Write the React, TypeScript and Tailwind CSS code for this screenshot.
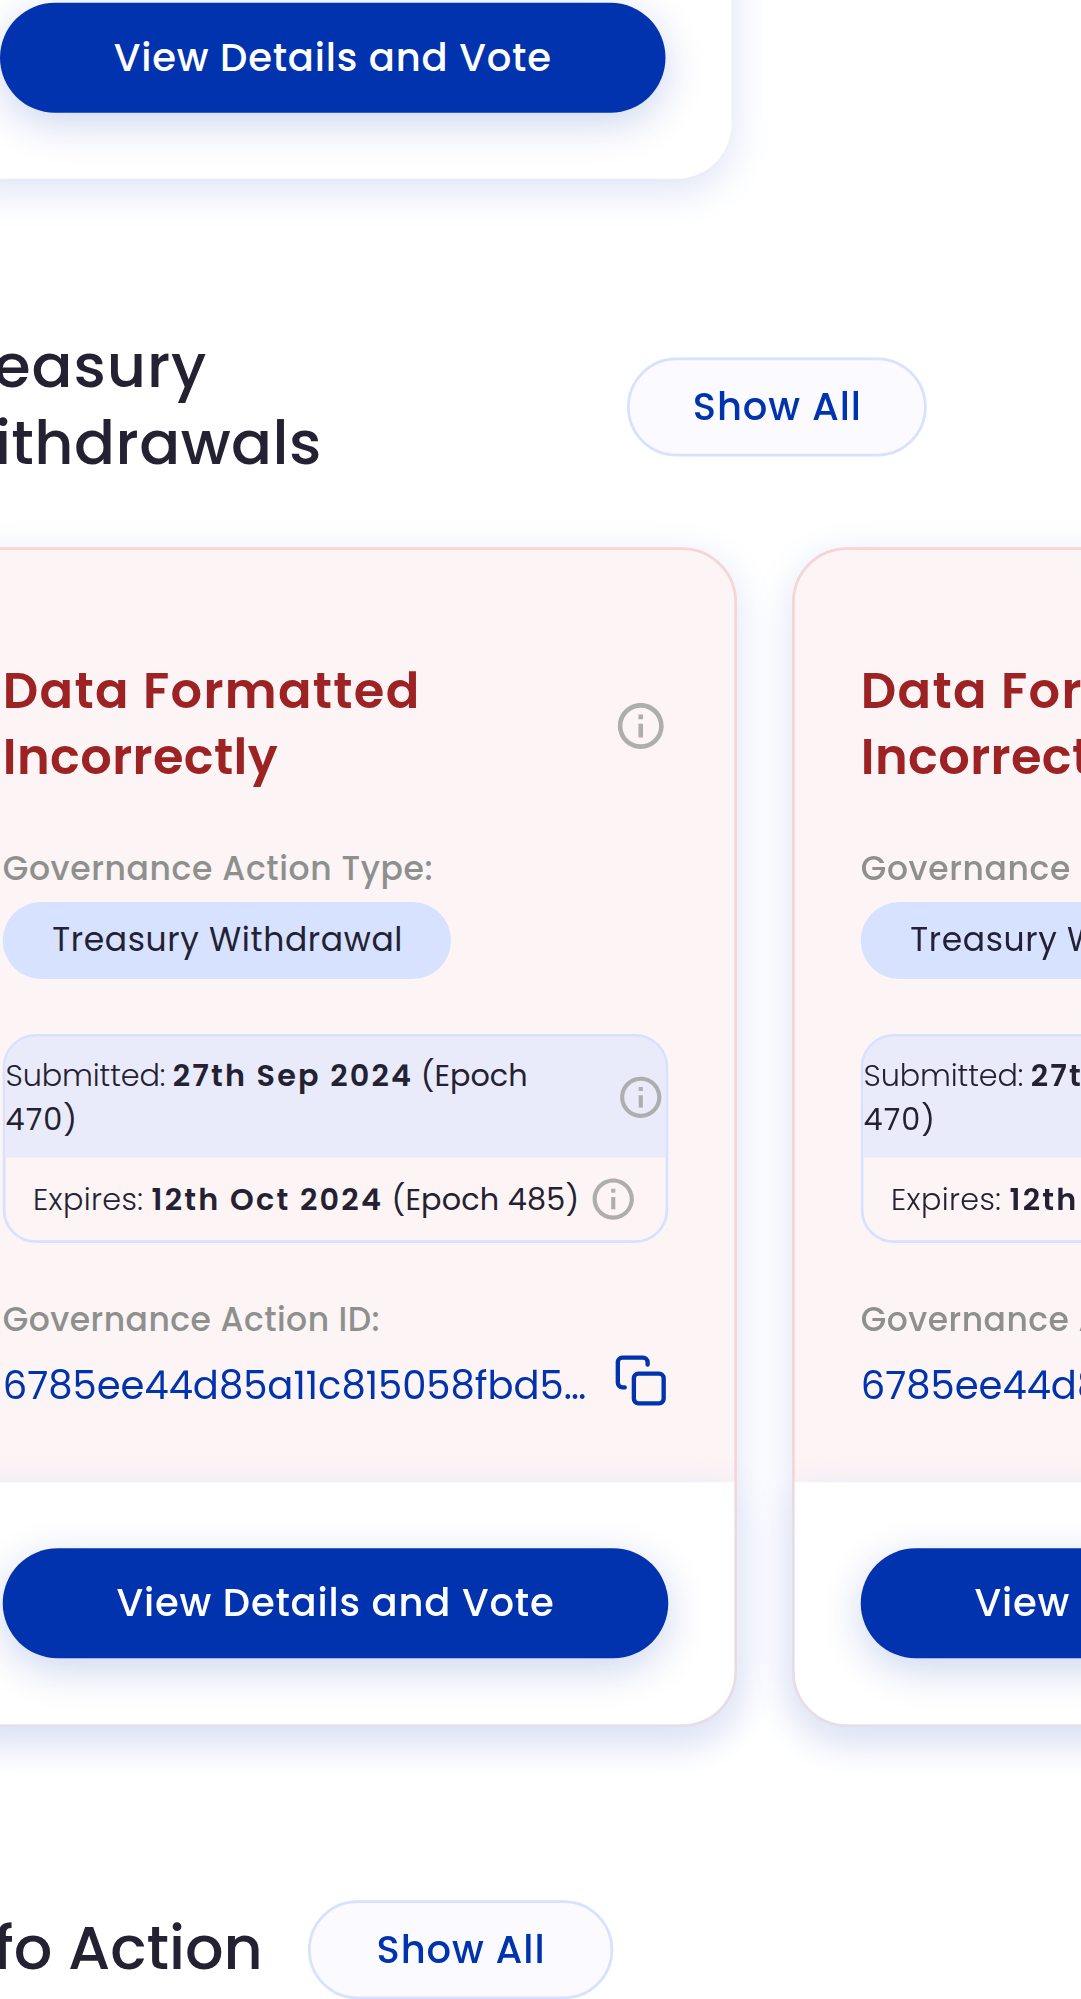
const SHADOW = "shadow-[0_4px_15px_#dde3f5]";

function InfoIcon({ className }: { className: string }) {
  return (
    <svg viewBox="0 0 24 24" fill="#adaead" className={className} aria-hidden="true">
      <path d="M11 7h2v2h-2zm0 4h2v6h-2zm1-9C6.48 2 2 6.48 2 12s4.48 10 10 10 10-4.48 10-10S17.52 2 12 2m0 18c-4.41 0-8-3.59-8-8s3.59-8 8-8 8 3.59 8 8-3.59 8-8 8" />
    </svg>
  );
}

function CopyIcon() {
  return (
    <svg
      viewBox="0 0 24 24"
      fill="none"
      stroke="#0033ad"
      strokeWidth="1.9"
      strokeLinecap="round"
      strokeLinejoin="round"
      className="-mt-[0.2px] size-5 shrink-0"
      aria-hidden="true"
    >
      <rect x="9" y="9" width="13" height="13" rx="2" />
      <path d="M5 15H4a2 2 0 0 1-2-2V4a2 2 0 0 1 2-2h9a2 2 0 0 1 2 2v1" />
    </svg>
  );
}

function VoteButton() {
  return (
    <button className="flex h-10 w-full items-center justify-center rounded-full bg-[#0033ad] text-sm font-medium tracking-[0.29px] text-white shadow-[0_4px_15px_rgba(0,51,173,0.2)]">
      <span className="-translate-y-[0.35px]">View Details and Vote</span>
    </button>
  );
}

function ShowAll({ className }: { className: string }) {
  return (
    <button
      className={`${className} flex h-9 shrink-0 items-center justify-center rounded-full border border-[#d6e2ff] bg-[#fbfbff] pl-[0.33px] text-sm font-medium tracking-[0.33px] text-[#0033ad]`}
    >
      <span className="-translate-y-[0.35px]">Show All</span>
    </button>
  );
}

function ActionCard() {
  return (
    <article
      className={`w-[292px] shrink-0 rounded-[20px] border border-[#f6d5d5] bg-[#fdf4f5] ${SHADOW}`}
    >
      <div className="flex h-[339px] flex-col px-6 pt-10">
        <div className="flex h-12 items-center justify-between">
          <h3 className="w-[200px] -translate-y-[0.4px] text-lg leading-6 font-semibold text-[#9c2224]">
            <span className="tracking-[0.48px]">Data Formatted</span>{" "}
            <span className="tracking-[0.14px]">Incorrectly</span>
          </h3>
          <InfoIcon className="size-5 shrink-0" />
        </div>

        <p className="mt-5 text-xs leading-4 font-medium tracking-[0.23px] whitespace-nowrap text-[#8e908e]">
          Governance Action Type:
        </p>
        <div className="mt-1 flex h-7 w-[163px] shrink-0 items-center self-start rounded-full bg-[#d6e2ff] pl-[18px] text-xs tracking-[0.23px] whitespace-nowrap">
          <span className="-translate-y-[0.3px]">Treasury Withdrawal</span>
        </div>

        <div className="mt-5 flex h-[76px] shrink-0 flex-col overflow-hidden rounded-xl border border-[#d6e2ff] text-[11px] leading-4">
          <div className="flex h-11 items-center justify-center bg-[#e9eafa]">
            <p className="flex-1 font-light">
              <span className="-tracking-[0.05px]">Submitted:</span>{" "}
              <span className="-ml-[0.3px] font-semibold tracking-[0.8px]">27th Sep 2024</span>{" "}
              <span className="-ml-[0.3px] font-normal">
                (Epoch
                <br />
                <span className="tracking-[0.4px]">470)</span>
              </span>
            </p>
            <InfoIcon className="ml-1 size-[18px] shrink-0" />
          </div>
          <div className="flex flex-1 items-center justify-center">
            <p className="pl-[0.5px] font-light whitespace-nowrap">
              <span className="tracking-[0.13px]">Expires:</span>{" "}
              <span className="font-semibold tracking-[0.82px]">12th Oct 2024</span>{" "}
              <span className="font-normal tracking-[0.07px]">(Epoch 485)</span>
            </p>
            <InfoIcon className="mr-[0.8px] ml-[3px] size-[18px] shrink-0" />
          </div>
        </div>

        <p className="mt-5 text-xs leading-4 font-medium tracking-[0.17px] whitespace-nowrap text-[#8e908e]">
          Governance Action ID:
        </p>
        <div className="mt-1 flex items-start justify-between">
          <span className="-translate-y-[0.2px] text-sm leading-6 whitespace-nowrap text-[#0033ad]">
            6785ee44d85a11c815058fbd5…
          </span>
          <CopyIcon />
        </div>
      </div>
      <div className={`rounded-b-[19px] bg-white p-6 ${SHADOW}`}>
        <VoteButton />
      </div>
    </article>
  );
}

export default function App() {
  return (
    <div className="h-[1999px] w-[1081px] overflow-hidden bg-white">
      <main className="flex h-[727px] w-[394px] origin-top-left scale-[2.75] flex-col bg-white pt-[0.84px] font-['Poppins',sans-serif] text-[#242232]">
        <div className={`-mt-[100px] -ml-6 w-[290px] shrink-0 rounded-[20px] bg-white px-6 pt-[100px] pb-6 ${SHADOW}`}>
          <VoteButton />
        </div>

        <div className="mt-[55px] -ml-6 flex h-14 shrink-0 items-center">
          <h2 className="w-[252px] -translate-y-[0.45px] text-[22px] leading-7 font-medium">
            <span className="block tracking-[0.34px]">Treasury</span>
            <span className="block tracking-[0.17px]">Withdrawals</span>
          </h2>
          <ShowAll className="w-[109px]" />
        </div>

        <div className="mt-[23px] -ml-6 flex w-max shrink-0 gap-5">
          <ActionCard />
          <ActionCard />
        </div>

        <div className="mt-[63px] -ml-6 flex shrink-0 items-center">
          <h2 className="w-[136.2px] pl-[1.6px] text-[22px] leading-7 font-medium whitespace-nowrap">
            Info Action
          </h2>
          <ShowAll className="w-[110.6px]" />
        </div>
      </main>
    </div>
  );
}
